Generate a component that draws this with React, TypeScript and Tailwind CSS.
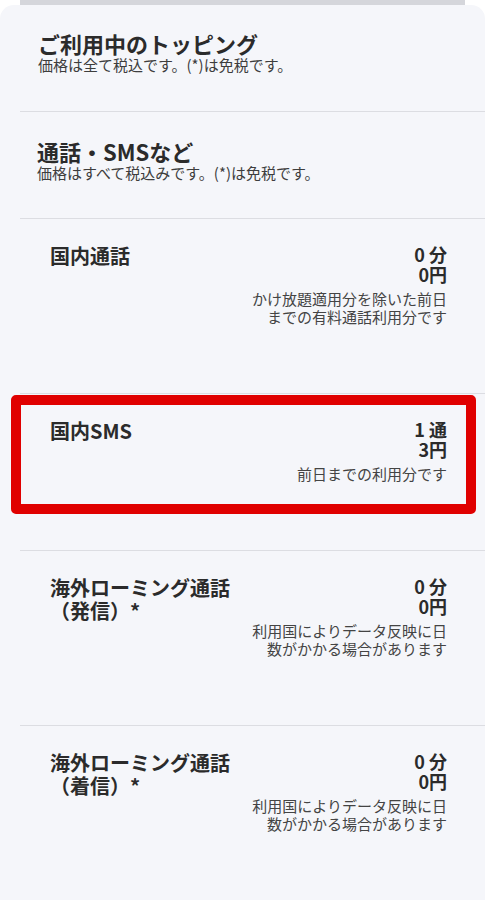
const FONT = { fontFamily: '"Noto Sans CJK JP", "Noto Sans", sans-serif' };

interface UsageItem {
  name: string;
  amount: string;
  price: string;
  note: string;
  highlight?: boolean;
}

const items: UsageItem[] = [
  { name: "国内通話", amount: "0 分", price: "0円", note: "かけ放題適用分を除いた前日までの有料通話利用分です" },
  { name: "国内SMS", amount: "1 通", price: "3円", note: "前日までの利用分です", highlight: true },
  { name: "海外ローミング通話（発信）*", amount: "0 分", price: "0円", note: "利用国によりデータ反映に日数がかかる場合があります" },
  { name: "海外ローミング通話（着信）*", amount: "0 分", price: "0円", note: "利用国によりデータ反映に日数がかかる場合があります" },
];

function SectionHeader({ title, sub, className }: { title: string; sub: string; className?: string }) {
  return (
    <div className={className}>
      <h2 className="text-[22px] leading-[26px] font-bold text-[#2b2b2b]">{title}</h2>
      <p className="text-[15px] leading-[18px] text-[#3d3d3d]">{sub}</p>
    </div>
  );
}

function UsageRow({ item }: { item: UsageItem }) {
  return (
    <div className="relative ml-5 border-t border-[#dcdde2] pt-[25px] pb-[67px] pl-[30px] pr-[38px] flex justify-between">
      <div className="w-[190px] text-[20px] leading-[23px] font-bold text-[#2b2b2b]">{item.name}</div>
      <div className="w-[200px] text-right">
        <div className="text-[18px] leading-[20px] font-bold text-[#2b2b2b]">{item.amount}</div>
        <div className="text-[18px] leading-[20px] font-bold text-[#2b2b2b]">{item.price}</div>
        <div className="mt-[6px] text-[15px] leading-[18px] text-[#444]">{item.note}</div>
      </div>
      {item.highlight && (
        <div className="absolute left-[-9px] right-[9px] top-[1px] bottom-[36px] border-[10px] border-[#e00000] rounded-[5px]" />
      )}
    </div>
  );
}

export default function App() {
  return (
    <div className="min-h-screen bg-white" style={FONT}>
      <div className="mx-5 h-[5px] bg-[#d5d6db]" />
      <div className="min-h-[895px] bg-[#f5f6fa] rounded-t-[14px] pt-[25px]">
        <SectionHeader
          title="ご利用中のトッピング"
          sub="価格は全て税込です。(*)は免税です。"
          className="pl-[38px] pb-[37px]"
        />
        <div className="ml-5 border-t border-[#dcdde2]">
          <SectionHeader
            title="通話・SMSなど"
            sub="価格はすべて税込みです。(*)は免税です。"
            className="pl-[17px] pt-[26px] pb-[36px]"
          />
        </div>
        {items.map((item) => (
          <UsageRow key={item.name} item={item} />
        ))}
      </div>
    </div>
  );
}
